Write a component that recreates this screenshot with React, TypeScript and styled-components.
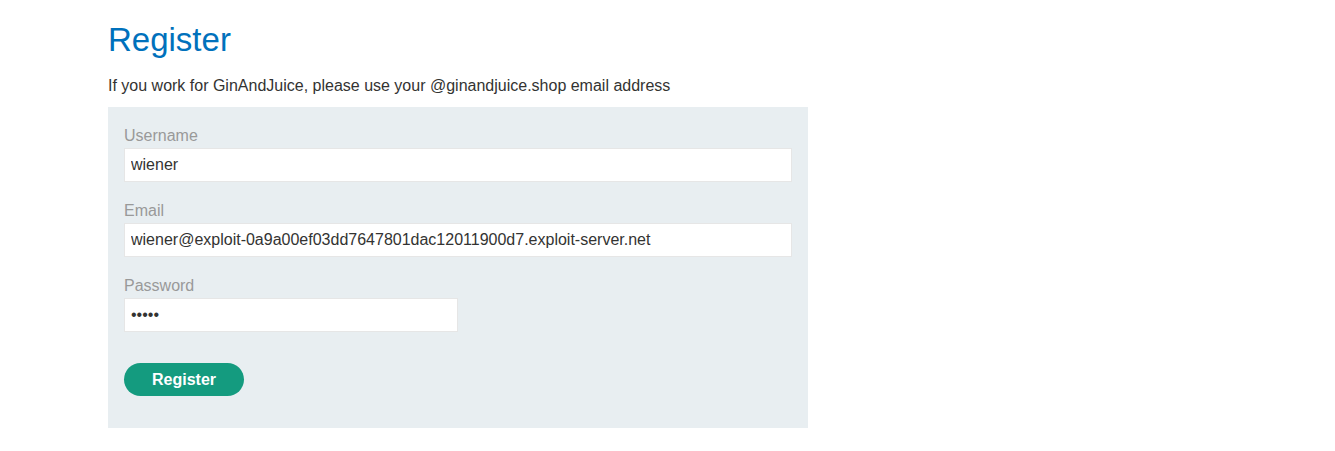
import React from "react";
import styled, { createGlobalStyle } from "styled-components";

const Global = createGlobalStyle`
  html, body { margin: 0; padding: 0; background: #fff; }
  body { font-family: "Liberation Sans", Arial, sans-serif; color: #333332; }
  * { box-sizing: border-box; }
`;

const Page = styled.main`
  padding: 0 108px;
  width: 1335px;
`;

const Title = styled.h1`
  margin: 0;
  padding-top: 20px;
  font-size: 33px;
  line-height: 40px;
  font-weight: 400;
  color: #0071bc;
`;

const Intro = styled.p`
  margin: 14px 0 0;
  font-size: 16px;
  line-height: 24px;
  color: #333332;
`;

const Form = styled.form`
  width: 700px;
  margin-top: 9px;
  background: #e8eef1;
  padding: 16px 16px 32px;
  display: flex;
  flex-direction: column;
`;

const Label = styled.label`
  display: block;
  padding-top: 1px;
  font-size: 16px;
  line-height: 24px;
  color: #999;
`;

const Input = styled.input<{ $half?: boolean }>`
  display: block;
  width: ${(p) => (p.$half ? "334px" : "668px")};
  height: 34px;
  margin: 0 0 16px;
  padding: 0 6px;
  border: 1px solid #e6e6e6;
  background: #fff;
  font-family: "Liberation Sans", Arial, sans-serif;
  font-size: 16px;
  color: #333332;
  outline: none;
`;

const Button = styled.button`
  align-self: flex-start;
  margin-top: 15px;
  width: 120px;
  height: 33px;
  border: none;
  border-radius: 25px;
  background: #149b7f;
  color: #fff;
  font-family: "Liberation Sans", Arial, sans-serif;
  font-size: 16px;
  font-weight: 700;
  cursor: pointer;
`;

export default function App() {
  return (
    <>
      <Global />
      <Page>
        <Title>Register</Title>
        <Intro>If you work for GinAndJuice, please use your @ginandjuice.shop email address</Intro>
        <Form onSubmit={(e) => e.preventDefault()}>
          <Label>Username</Label>
          <Input defaultValue="wiener" />
          <Label>Email</Label>
          <Input defaultValue="wiener@exploit-0a9a00ef03dd7647801dac12011900d7.exploit-server.net" />
          <Label>Password</Label>
          <Input $half type="password" defaultValue="peter" />
          <Button type="submit">Register</Button>
        </Form>
      </Page>
    </>
  );
}
